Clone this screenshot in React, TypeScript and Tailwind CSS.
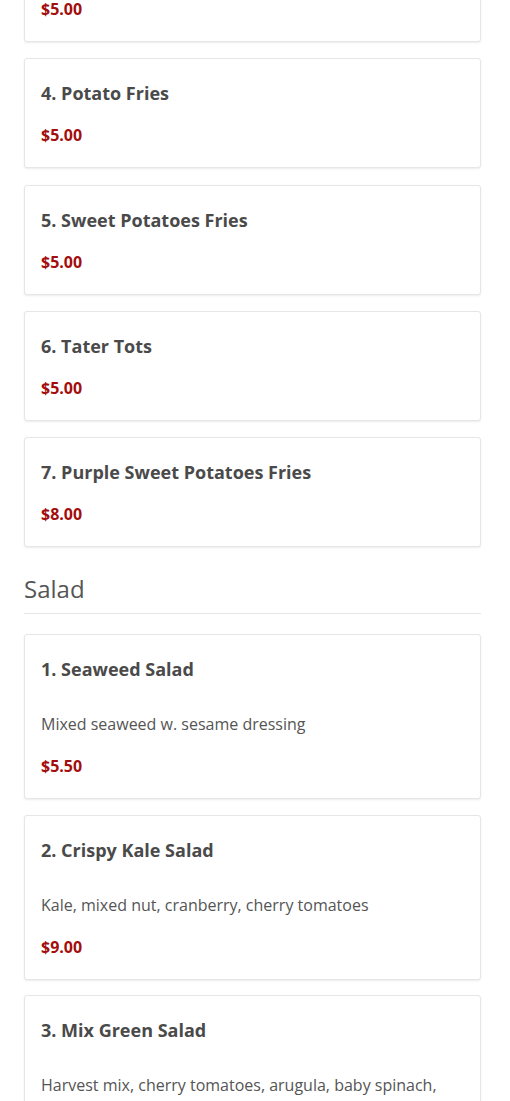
const fries = [
  { name: "3. Curly Fries", price: "$5.00" },
  { name: "4. Potato Fries", price: "$5.00" },
  { name: "5. Sweet Potatoes Fries", price: "$5.00" },
  { name: "6. Tater Tots", price: "$5.00" },
  { name: "7. Purple Sweet Potatoes Fries", price: "$8.00" },
];

const salads = [
  { name: "1. Seaweed Salad", desc: "Mixed seaweed w. sesame dressing", price: "$5.50" },
  { name: "2. Crispy Kale Salad", desc: "Kale, mixed nut, cranberry, cherry tomatoes", price: "$9.00" },
  {
    name: "3. Mix Green Salad",
    desc: "Harvest mix, cherry tomatoes, arugula, baby spinach, cucumber",
    price: "$8.00",
  },
];

function ItemCard({ name, desc, price }: { name: string; desc?: string; price: string }) {
  return (
    <div className="rounded-[3px] border border-[#e6e6e6] bg-white px-4 pt-4 pb-[21px] shadow-[0_1px_2px_rgba(0,0,0,0.08)]">
      <h3 className="mt-2 text-[18px] leading-[20px] font-bold text-[#4a4a4a]">{name}</h3>
      {desc && <p className="mt-[34px] text-[16px] leading-[22px] text-[#555]">{desc}</p>}
      <p className={`${desc ? "mt-[20px]" : "mt-[21px]"} text-[16px] leading-[22px] font-bold text-[#a30d0d]`}>
        {price}
      </p>
    </div>
  );
}

export default function App() {
  return (
    <div className="min-h-screen overflow-hidden bg-white font-['Open_Sans',sans-serif]">
      <div className="-mt-[68px] ml-6 w-[457px]">
        <div className="flex flex-col gap-[16.33px]">
          {fries.map((f) => (
            <ItemCard key={f.name} {...f} />
          ))}
        </div>
        <h2 className="mt-[29px] border-b border-[#e6e6e6] pb-[11px] text-[24px] leading-[26px] font-normal text-[#555]">
          Salad
        </h2>
        <div className="mt-[20px] flex flex-col gap-[15.5px]">
          {salads.map((s) => (
            <ItemCard key={s.name} {...s} />
          ))}
        </div>
      </div>
    </div>
  );
}
